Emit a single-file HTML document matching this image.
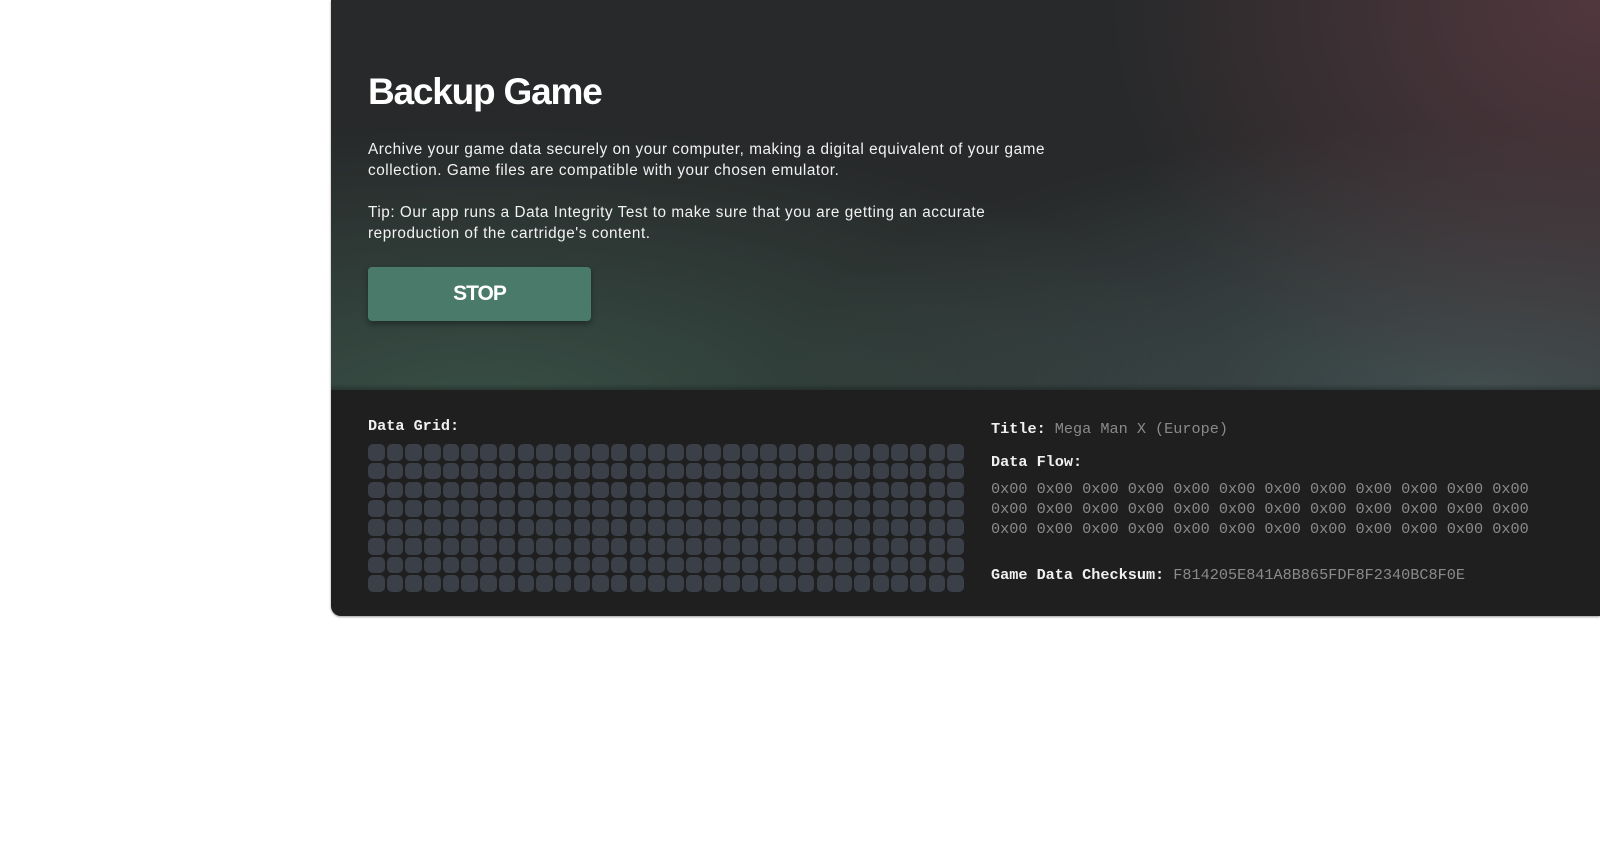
<!DOCTYPE html>
<html><head><meta charset="utf-8">
<style>
html,body{margin:0;padding:0;width:1600px;height:854px;background:#fff;overflow:hidden}
.panel{position:absolute;left:331px;top:0;width:1269px;height:616px;border-bottom-left-radius:10px;overflow:hidden;background:#1f1f1f;box-shadow:0 1px 2px rgba(0,0,0,.4)}
.top{position:absolute;left:0;top:0;width:1269px;height:390px;
background:
radial-gradient(ellipse 500px 430px at 1269px 0px, rgba(95,60,68,.75), rgba(95,60,68,0) 100%),
radial-gradient(ellipse 700px 265px at 1150px 390px, rgba(75,95,95,.7), rgba(75,95,95,0) 100%),
radial-gradient(ellipse 750px 280px at 150px 405px, rgba(60,88,76,.8), rgba(60,88,76,0) 100%),
#27292a;}
.top:after{content:"";position:absolute;left:0;right:0;bottom:0;height:6px;background:linear-gradient(rgba(0,0,0,0),rgba(0,0,0,.25))}
h1{position:absolute;left:37px;top:72px;margin:0;font:bold 37px/40px "Liberation Sans",sans-serif;letter-spacing:-1.2px;color:#fff}
p{position:absolute;left:37px;margin:0;font:15.3px/21.4px "Liberation Sans",sans-serif;color:#f2f2f2;letter-spacing:0.55px;white-space:nowrap}
.btn{position:absolute;left:37px;top:267px;width:223px;height:54px;border-radius:4px;background:#4a7a6a;color:#fff;font:bold 21px/54px "Liberation Sans",sans-serif;text-align:center;letter-spacing:-1px;box-shadow:0 3px 6px rgba(0,0,0,.35)}
.mono{font-family:"Liberation Mono",monospace;position:absolute;font-size:15.2px;color:#8a8a8a;white-space:pre}
.mono b{color:#f0f0f0}
.grid{position:absolute;left:37px;top:444px;display:grid;grid-template-columns:repeat(32,16.5px);grid-auto-rows:16.6px;gap:2.2px}
.grid div{background:#3a3f48;border-radius:5px}
</style></head><body>
<div class="panel">
 <div class="top">
  <h1>Backup Game</h1>
  <p style="top:139px">Archive your game data securely on your computer, making a digital equivalent of your game<br>collection. Game files are compatible with your chosen emulator.</p>
  <p style="top:202px">Tip: Our app runs a Data Integrity Test to make sure that you are getting an accurate<br>reproduction of the cartridge's content.</p>
  <div class="btn">STOP</div>
 </div>
 <div class="mono" style="left:37px;top:417px"><b>Data Grid:</b></div>
 <div class="grid" id="g"></div>
 <div class="mono" style="left:660px;top:420px"><b>Title:</b> Mega Man X (Europe)</div>
 <div class="mono" style="left:660px;top:453px"><b>Data Flow:</b></div>
 <div class="mono" style="left:660px;top:480px;line-height:19.9px">0x00 0x00 0x00 0x00 0x00 0x00 0x00 0x00 0x00 0x00 0x00 0x00
0x00 0x00 0x00 0x00 0x00 0x00 0x00 0x00 0x00 0x00 0x00 0x00
0x00 0x00 0x00 0x00 0x00 0x00 0x00 0x00 0x00 0x00 0x00 0x00</div>
 <div class="mono" style="left:660px;top:566px"><b>Game Data Checksum:</b> F814205E841A8B865FDF8F2340BC8F0E</div>
</div>
<script>
var g=document.getElementById('g');for(var i=0;i<256;i++){g.appendChild(document.createElement('div'));}
</script>
</body></html>
